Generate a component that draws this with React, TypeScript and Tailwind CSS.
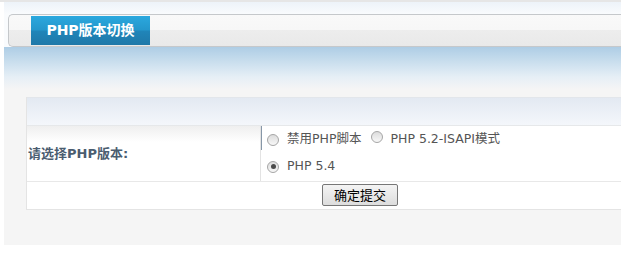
import React from "react";

const FONT = { fontFamily: '"DejaVu Sans", "Noto Sans CJK SC", sans-serif' };

function Radio({ checked }: { checked?: boolean }) {
  return (
    <span className="inline-flex h-[12px] w-[12px] shrink-0 items-center justify-center rounded-full border border-[#a6a6a6] bg-gradient-to-b from-[#dcdcdc] to-[#f8f8f8]">
      {checked && <span className="h-[5px] w-[5px] rounded-full bg-[#4a4a4a]" />}
    </span>
  );
}

export default function App() {
  return (
    <div className="h-[254px] w-[621px] overflow-hidden bg-white" style={FONT}>
      <div className="h-[2px] bg-[#e6e6e6]" />
      <div className="ml-[4px] h-[243px] bg-[#f5f5f5]">
        <div className="h-[12px] bg-gradient-to-b from-[#edf3f9] to-[#f9fbfd]" />
        <div className="bg-[#f9fbfd] pl-[4px]">
          <div className="flex h-[33px] items-start rounded-l-[5px] border border-r-0 border-[#c5c8cb] bg-[linear-gradient(to_bottom,#f9f9f9_0%,#f7f7f7_48%,#ededed_48%,#e9e9e9_100%)] pl-[22px] pt-[1px]">
            <div className="flex h-[29px] w-[119px] items-center justify-center bg-[linear-gradient(to_bottom,#2ba8de_0%,#2497cc_48%,#2085b9_52%,#1f78a8_100%)] text-[14px] font-bold text-white">
              PHP版本切换
            </div>
          </div>
        </div>
        <div className="h-[50px] bg-[linear-gradient(to_bottom,#aecde5_0px,#c4dbec_12px,#e6eff6_30px,#f5f5f5_42px,#f5f5f5_100%)]" />
        <div className="ml-[22px] border-b border-l border-[#e4e4e4] bg-white">
          <div className="h-[28px] border-t border-[#e2e6eb] bg-gradient-to-b from-[#e3e9f2] to-[#f4f7fb]" />
          <div className="flex h-[56px] border-t border-[#e6e8ea]">
            <div className="flex w-[233px] items-center bg-[linear-gradient(to_bottom,#efefef_0px,#ffffff_16px,#ffffff_100%)] pl-[1px] text-[13px] font-bold text-[#4b5d70]">
              请选择PHP版本:
            </div>
            <div className="flex-1 border-l border-[#e3e3e3] bg-[linear-gradient(to_bottom,#8797a8_0px,#8797a8_24px,transparent_24px)] bg-[length:1px_100%] bg-no-repeat pl-[6px] text-[12.5px] text-[#555]">
              <div className="flex h-[27px] items-center">
                <Radio />
                <span className="ml-[8px]">禁用PHP脚本</span>
                <span className="ml-[10px]"><Radio /></span>
                <span className="ml-[7px]">PHP 5.2-ISAPI模式</span>
              </div>
              <div className="flex h-[27px] items-center">
                <Radio checked />
                <span className="ml-[8px]">PHP 5.4</span>
              </div>
            </div>
          </div>
          <div className="h-[28px] border-t border-[#e8e8e8] pl-[295px] pt-[2px]">
            <button
              className="flex h-[22px] w-[76px] items-center justify-center rounded-[2px] border border-[#777] bg-gradient-to-b from-[#f4f4f4] to-[#dddddd] text-[13px] text-black"
              style={{ fontFamily: '"Noto Sans CJK SC", sans-serif' }}
            >
              确定提交
            </button>
          </div>
        </div>
      </div>
    </div>
  );
}
